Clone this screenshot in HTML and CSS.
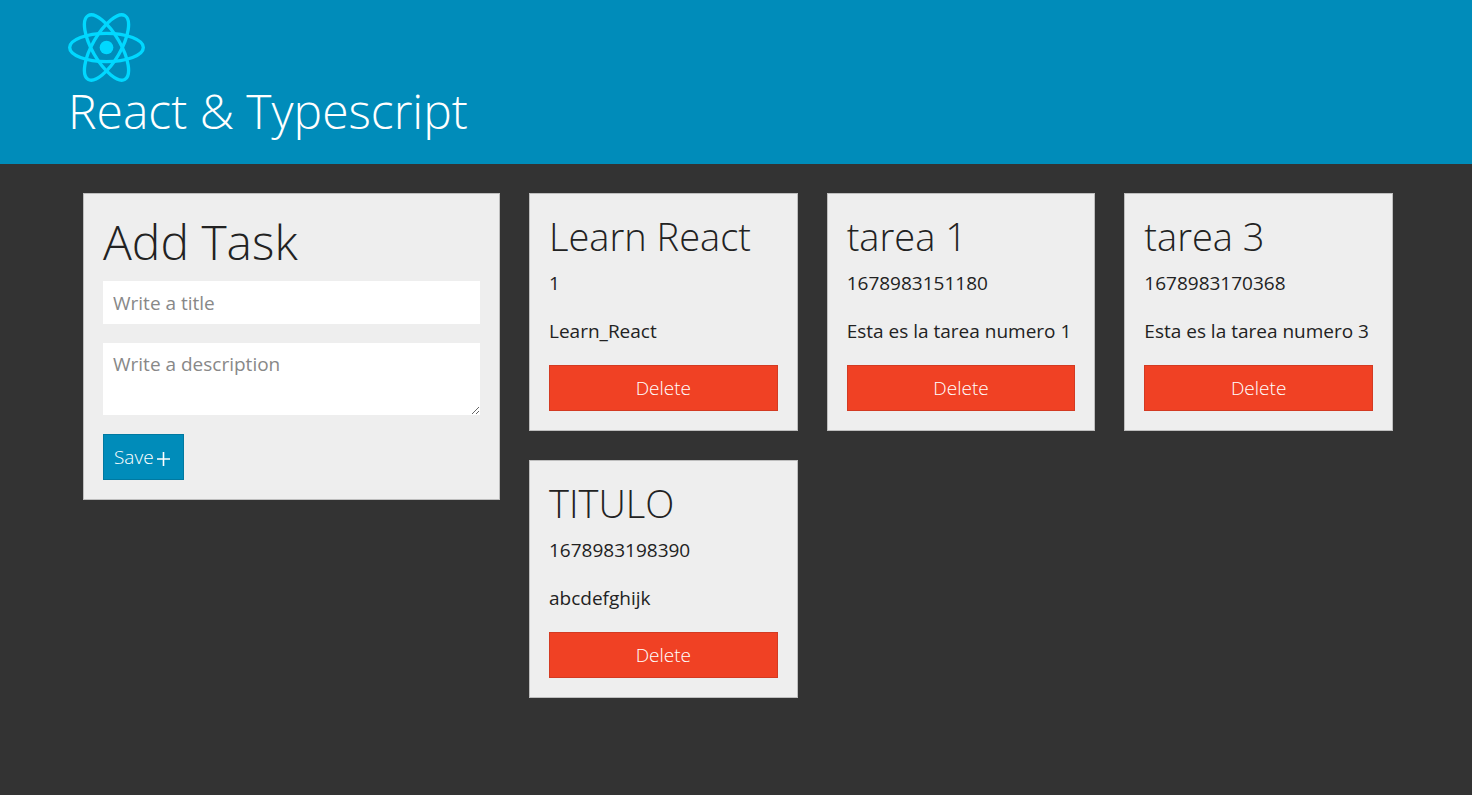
FILE: index.html
```html
<!DOCTYPE html>
<html lang="en">
<head>
<meta charset="utf-8">
<title>React &amp; Typescript</title>
<link rel="stylesheet" href="styles.css">
</head>
<body>
<header class="navbar">
  <svg class="logo" viewBox="-11.5 -10.25 23 20.5" role="img" aria-label="React logo">
    <circle r="2.05" fill="currentColor"/>
    <g fill="none" stroke="currentColor">
      <ellipse rx="11" ry="4.2"/>
      <ellipse rx="11" ry="4.2" transform="rotate(60)"/>
      <ellipse rx="11" ry="4.2" transform="rotate(120)"/>
    </g>
  </svg>
  <h1 class="heading">React &amp; Typescript</h1>
</header>
<main class="layout">
  <form class="card task-form">
    <h1 class="heading">Add Task</h1>
    <input class="field" type="text" placeholder="Write a title" aria-label="Title">
    <textarea class="field field-area" placeholder="Write a description" aria-label="Description"></textarea>
    <button class="button button-save" type="button">Save<svg class="plus" viewBox="0 0 19 19" aria-hidden="true"><path d="M9.5 4v14M3 11h13" fill="none" stroke="currentColor" stroke-width="1.6"/></svg></button>
  </form>
  <section class="tasks">
    <article class="card">
      <h2 class="title">Learn React</h2>
      <p class="text">1</p>
      <p class="text">Learn_React</p>
      <button class="button button-delete" type="button">Delete</button>
    </article>
    <article class="card">
      <h2 class="title">tarea 1</h2>
      <p class="text">1678983151180</p>
      <p class="text">Esta es la tarea numero 1</p>
      <button class="button button-delete" type="button">Delete</button>
    </article>
    <article class="card">
      <h2 class="title">tarea 3</h2>
      <p class="text">1678983170368</p>
      <p class="text">Esta es la tarea numero 3</p>
      <button class="button button-delete" type="button">Delete</button>
    </article>
    <article class="card">
      <h2 class="title">TITULO</h2>
      <p class="text">1678983198390</p>
      <p class="text">abcdefghijk</p>
      <button class="button button-delete" type="button">Delete</button>
    </article>
  </section>
</main>
</body>
</html>
```
FILE: styles.css
```css
* {
  box-sizing: border-box;
}

body {
  margin: 0;
  background: #333;
  color: #222;
  font-family: "Open Sans", sans-serif;
  font-size: 19px;
  line-height: 29px;
}

.navbar {
  padding: 13px 68px 24px;
  background: #008cba;
  color: #fff;
}

.logo {
  display: block;
  width: 77px;
  height: 69px;
  color: #00d8ff;
}

.heading {
  margin: 0;
  font-size: 48px;
  font-weight: 300;
  line-height: 58px;
}

.layout {
  display: grid;
  grid-template-columns: minmax(0, 417fr) minmax(0, 864fr);
  align-items: start;
  gap: 29px;
  padding: 29px 79px 29px 83px;
}

.tasks {
  display: grid;
  grid-template-columns: repeat(3, minmax(0, 1fr));
  gap: 29px;
}

.card {
  display: flex;
  flex-direction: column;
  padding: 19px;
  border: 1px solid #bebebe;
  background: #eee;
}

.task-form .heading {
  margin-bottom: 10px;
}

.field {
  width: 100%;
  height: 43px;
  margin: 0 0 19px;
  padding: 7px 10px;
  border: 0;
  border-radius: 0;
  background: #fff;
  color: #222;
  font: inherit;
}

.field-area {
  height: 72px;
  resize: vertical;
}

.field::placeholder {
  color: #888;
}

.title {
  margin: 0 0 10px;
  font-size: 38px;
  font-weight: 300;
  line-height: 46px;
}

.text {
  margin: 0 0 19px;
}

.button {
  display: flex;
  align-items: center;
  justify-content: center;
  height: 46px;
  padding: 0 10px;
  border: 1px solid;
  border-radius: 0;
  color: #fff;
  font: inherit;
  font-weight: 300;
}

.button-save {
  align-self: flex-start;
  border-color: #0079a1;
  background: #008cba;
}

.button-delete {
  border-color: #d33a22;
  background: #f04124;
}

.plus {
  width: 19px;
  height: 19px;
}
```
